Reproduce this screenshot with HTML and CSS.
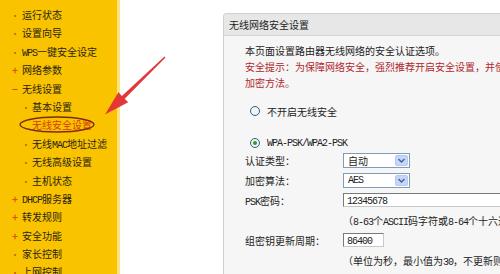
FILE: index.html
```html
<!DOCTYPE html>
<html>
<head>
  <meta charset="UTF-8">
  <meta name="viewport" content="width=device-width, initial-scale=1.0">

  <link rel="stylesheet" href="styles.css">

</head>
<body>
<div class="page">

    <nav class="menu">
    <ul>
        <li class="dot">运行状态</li>
        <li class="dot">设置向导</li>
        <li class="dot"><span class="lat">WPS</span>一键安全设定</li>
        <li class="plus">网络参数</li>
        <li class="minus">无线设置</li>
        <li class="dot sub">基本设置</li>
        <li class="sub current">无线安全设置</li>
        <li class="dot sub">无线<span class="lat">MAC</span>地址过滤</li>
        <li class="dot sub">无线高级设置</li>
        <li class="dot sub">主机状态</li>
        <li class="plus"><span class="lat">DHCP</span>服务器</li>
        <li class="plus">转发规则</li>
        <li class="plus">安全功能</li>
        <li class="dot">家长控制</li>
        <li class="dot">上网控制</li>
    </ul>
    </nav>

    <div class="main">
    <div class="panel">
        <div class="panel-title">无线网络安全设置</div>
        <div class="panel-body">

            <p class="intro">本页面设置路由器无线网络的安全认证选项。</p>
            <p class="warn">安全提示：为保障网络安全，强烈推荐开启安全设置，并使用<span class="lat">WPA-PSK/WPA2-PSK AES</span><br>加密方法。</p>

            <div class="radio-row first">
                <span class="radio"></span>不开启无线安全
            </div>
            <div class="radio-row">
                <span class="radio checked"></span><span class="lat">WPA-PSK/WPA2-PSK</span>
            </div>

            <div class="form">
                <label>认证类型：</label>
                <div class="select"><span>自动</span><span class="drop"><svg width="7" height="5" viewBox="0 0 7 5"><path d="M0.5 1 L3.5 4 L6.5 1" fill="none" stroke="#4a5f8c" stroke-width="1.4"/></svg></span></div>

                <label>加密算法：</label>
                <div class="select"><span class="lat">AES</span><span class="drop"><svg width="7" height="5" viewBox="0 0 7 5"><path d="M0.5 1 L3.5 4 L6.5 1" fill="none" stroke="#4a5f8c" stroke-width="1.4"/></svg></span></div>

                <label><span class="lat">PSK</span>密码：</label>
                <div class="field wide"><span class="lat">12345678</span></div>

                <div></div>
                <div class="hint">（<span class="lat">8-63</span>个<span class="lat">ASCII</span>码字符或<span class="lat">8-64</span>个十六进制字符）</div>

                <label>组密钥更新周期：</label>
                <div class="field short"><span class="lat">86400</span></div>

                <div></div>
                <div class="hint">（单位为秒，最小值为<span class="lat">30</span>，不更新则为<span class="lat">0</span>）</div>
            </div>

        </div>
    </div>
    </div>

</div>

<!-- annotation drawn over the screenshot -->
<svg class="annot" width="500" height="274" viewBox="0 0 500 274">
    <ellipse cx="57" cy="124.5" rx="37" ry="7.5" fill="none" stroke="#7a2c12" stroke-width="1.4"/>
    <polygon points="165.5,57.5 164.5,56.5 121.9,95.9 118.4,92.3 105,114.5 128.2,102.3 124.7,98.7" fill="#e2383a"/>
</svg>

</body>
</html>
```

FILE: styles.css
```css
body {
    margin: 0;
    font-family: "Noto Sans CJK SC", sans-serif;
    font-size: 10px;
    color: #222;
    background: #fff;
}

.page {
    display: flex;
    width: 500px;
    height: 274px;
    overflow: hidden;
}

.lat {
    font-family: "Liberation Mono", monospace;
    letter-spacing: -1px;
}

/* left menu */

.menu {
    flex: none;
    width: 117px;
    background: #f9c300;
    border-right: 3px solid #fde27e;
}

.menu ul {
    list-style: none;
    margin: 0;
    padding: 6px 0 0 0;
}

.menu li {
    height: 18.4px;
    line-height: 18.4px;
    padding-left: 8px;
    white-space: nowrap;
    color: #2b2412;
}

.menu li::before {
    display: inline-block;
    width: 14px;
    text-align: center;
    color: #cf5a14;
}

.menu li.sub {
    padding-left: 20px;
}

.menu li.sub::before {
    width: 12px;
}

.menu li.dot::before {
    content: "•";
    font-size: 9px;
}

.menu li.plus::before {
    content: "+";
    font-weight: bold;
}

.menu li.minus::before {
    content: "−";
    font-weight: bold;
}

.menu li.current {
    color: #d63c0c;
}

.menu li.current::before {
    content: "";
}

/* main area */

.main {
    flex: 1;
    padding: 13px 0 0 103px;
    overflow: hidden;
}

.panel {
    width: 330px;
    height: 300px;
    border: 1px solid #cfcfcf;
    border-right: 0;
    border-radius: 4px 0 0 0;
    background: #f6f6f6;
}

.panel-title {
    height: 21px;
    line-height: 21px;
    padding-left: 5px;
    background: #e7e7e7;
    border-bottom: 1px solid #d6d6d6;
    border-radius: 4px 0 0 0;
}

.panel-body {
    padding: 8px 0 0 21px;
    white-space: nowrap;
    overflow: hidden;
}

.panel-body p {
    margin: 0;
    line-height: 14px;
}

.intro {
    margin-bottom: 2px !important;
}

.warn {
    color: #b1262c;
}

.radio-row {
    display: flex;
    align-items: center;
    height: 14px;
    margin-top: 18px;
}

.radio-row.first {
    margin-top: 14px;
}

.radio {
    width: 8px;
    height: 8px;
    margin: 0 7px 0 5px;
    border: 1px solid #2f5f8a;
    border-radius: 50%;
    background: #f2f2ee;
    display: flex;
    align-items: center;
    justify-content: center;
}

.radio.checked::after {
    content: "";
    width: 4px;
    height: 4px;
    border-radius: 50%;
    background: #2e9a2e;
}

/* form grid */

.form {
    display: grid;
    grid-template-columns: 98px auto;
    grid-auto-rows: 20px;
    align-items: center;
}

.select {
    box-sizing: border-box;
    width: 67px;
    height: 15px;
    border: 1px solid #7f9db9;
    background: #fff;
    display: flex;
    align-items: center;
    padding: 0 1px 0 4px;
}

.drop {
    margin-left: auto;
    box-sizing: border-box;
    width: 13px;
    height: 11px;
    border: 1px solid #b4c8f0;
    border-radius: 2px;
    background: #c5d6fb;
    display: flex;
    align-items: center;
    justify-content: center;
}

.field {
    box-sizing: border-box;
    height: 14px;
    line-height: 12px;
    padding-left: 3px;
    border: 1px solid #7a7a7a;
    border-right-color: #c8c8c8;
    border-bottom-color: #c8c8c8;
    background: #fff;
}

.field.wide {
    width: 180px;
}

.field.short {
    width: 41px;
}

.hint {
    color: #222;
}

/* red arrow + circle */

.annot {
    position: absolute;
    left: 0;
    top: 0;
    pointer-events: none;
}
```
